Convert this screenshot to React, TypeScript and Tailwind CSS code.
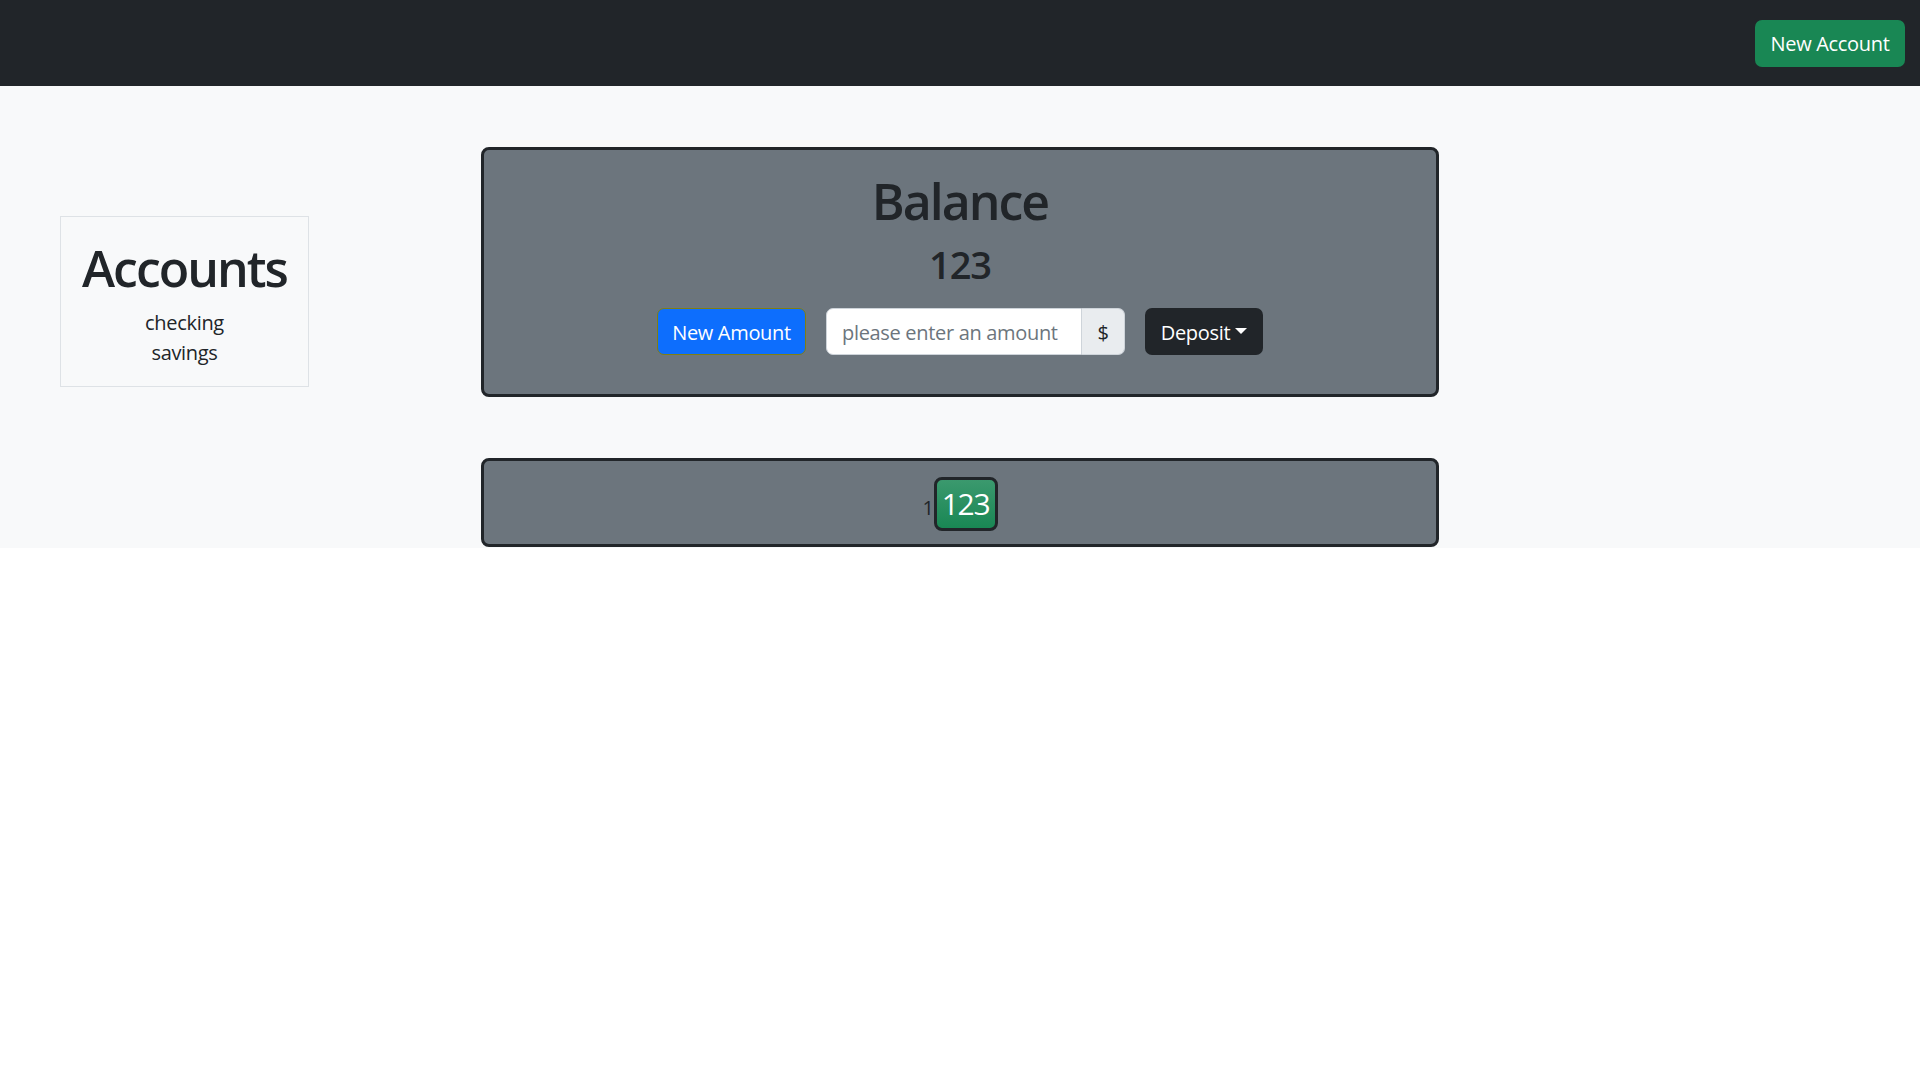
export default function App() {
  return (
    <div className="min-h-screen bg-white font-['Open_Sans',sans-serif] tracking-[-0.02em] text-[#212529]">
      <nav className="flex h-[86px] items-center justify-end bg-[#212529] pr-[15px]">
        <button className="h-[47px] w-[150px] rounded-[7px] bg-[#198754] pt-[2px] text-[20px] leading-[30px] text-white">
          New Account
        </button>
      </nav>
      <main className="flex bg-[#f8f9fa] pb-[1px] pt-[61px]">
        <aside className="w-[481px] shrink-0 pl-[60px] pt-[69px]">
          <div className="h-[171px] w-[249px] border border-[#dee2e6] pt-[21px] text-center">
            <h1 className="text-[50px] font-semibold leading-[60px] tracking-[-0.04em]">Accounts</h1>
            <div className="mt-[10px] text-[20px] leading-[30px]">
              <div>checking</div>
              <div>savings</div>
            </div>
          </div>
        </aside>
        <section className="w-[958px] shrink-0">
          <div className="h-[250px] rounded-[8px] border-[3px] border-[#212529] bg-[#6c757d] pt-[21px] text-center">
            <h1 className="text-[50px] font-semibold leading-[60px] tracking-[-0.04em]">Balance</h1>
            <h2 className="mt-[10px] text-[38px] font-semibold leading-[46px] tracking-[-0.03em]">123</h2>
            <div className="mt-[21px] flex justify-center gap-[20px]">
              <button className="h-[47px] w-[149px] rounded-[7px] border border-[#7f7f12] bg-[#0d6efd] pt-[2px] text-[20px] leading-[30px] text-white">
                New Amount
              </button>
              <div className="flex h-[47px]">
                <input
                  placeholder="please enter an amount"
                  className="h-full w-[256px] rounded-l-[7px] border border-[#ced4da] bg-white px-[15px] pt-[2px] text-[20px] text-[#212529] outline-none placeholder:text-[#6c757d]"
                />
                <span className="flex w-[43px] items-center justify-center rounded-r-[7px] border border-l-0 border-[#ced4da] bg-[#e9ecef] pt-[2px] text-[20px]">
                  $
                </span>
              </div>
              <button className="flex h-[47px] w-[118px] items-center justify-center rounded-[7px] bg-[#212529] pt-[2px] text-[20px] leading-[30px] text-white">
                Deposit
                <svg className="-mt-[3px] ml-[5px]" width="12" height="6" viewBox="0 0 12 6">
                  <path d="M0 0 L12 0 L6 6 Z" fill="#ffffff" />
                </svg>
              </button>
            </div>
          </div>
          <div className="mt-[61px] flex h-[89px] items-center justify-center rounded-[8px] border-[3px] border-[#212529] bg-[#6c757d]">
            <div className="flex items-baseline pt-[2px]">
              <span className="text-[20px] leading-[30px]">1</span>
              <span className="inline-flex h-[54px] w-[64px] items-center justify-center rounded-[8px] border-[3px] border-[#212529] bg-[linear-gradient(180deg,#3b996e,#198754)] text-[30px] leading-[36px] tracking-[-0.04em] text-white">
                123
              </span>
            </div>
          </div>
        </section>
      </main>
    </div>
  );
}
